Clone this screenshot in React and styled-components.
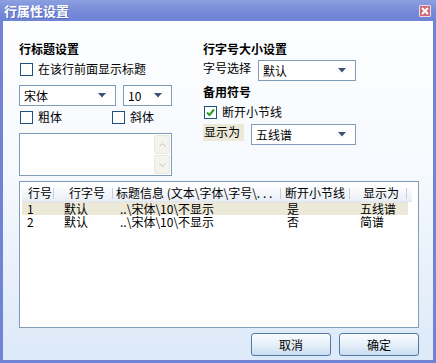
import React from 'react';
import styled, { createGlobalStyle } from 'styled-components';

const GlobalStyle = createGlobalStyle`
    html, body {
        margin: 0;
        padding: 0;
    }
    body {
        font-family: "Noto Sans CJK SC", "DejaVu Sans", sans-serif;
        font-size: 12px;
        color: #000;
    }
`;

const columns = [
    { title: '行号', width: 32, head: 6, cell: 5 },
    { title: '行字号', width: 59, head: 15, cell: 10 },
    { title: '标题信息 (文本\\字体\\字号\\. . .', width: 168, head: 3, cell: 7 },
    { title: '断开小节线', width: 69, head: 4, cell: 6 },
    { title: '显示为', width: 57, head: 13, cell: 10 },
];

const rows = [
    ['1', '默认', '..\\宋体\\10\\不显示', '是', '五线谱'],
    ['2', '默认', '..\\宋体\\10\\不显示', '否', '简谱'],
];

function Check({ checked }) {
    return (
        <Box>
            {checked && (
                <svg width="9" height="9" viewBox="0 0 9 9">
                    <path d="M1 4.5 L3.5 7 L8 1.5" fill="none" stroke="#21a121" strokeWidth="2" />
                </svg>
            )}
        </Box>
    );
}

function Combo({ width, children }) {
    return (
        <ComboBox $width={width}>
            <span>{children}</span>
            <svg width="8" height="5" viewBox="0 0 8 5">
                <path d="M0 0 H8 L4 4.5 Z" fill="#3d5277" />
            </svg>
        </ComboBox>
    );
}

export default function App() {
    return (
        <>
            <GlobalStyle />
            <Window>
                <TitleBar>
                    <Title>行属性设置</Title>
                    <CloseButton>
                        <svg width="8" height="8" viewBox="0 0 8 8">
                            <path d="M1 1 L7 7 M7 1 L1 7" stroke="#fff" strokeWidth="2" />
                        </svg>
                    </CloseButton>
                </TitleBar>

                <Client>
                    <TopSection>
                        <Column>
                            <Heading>行标题设置</Heading>
                            <CheckRow $top={4}>
                                <Check />
                                <span>在该行前面显示标题</span>
                            </CheckRow>
                            <ComboRow>
                                <Combo width={97}>宋体</Combo>
                                <Combo width={49}>10</Combo>
                            </ComboRow>
                            <CheckRow $top={3}>
                                <CheckItem $width={87}>
                                    <Check />
                                    <span>粗体</span>
                                </CheckItem>
                                <CheckItem>
                                    <Check />
                                    <span>斜体</span>
                                </CheckItem>
                            </CheckRow>
                            <TextArea>
                                <ScrollButtons>
                                    <ScrollButton>
                                        <svg width="7" height="4" viewBox="0 0 7 4">
                                            <path d="M0.5 3.5 L3.5 0.5 L6.5 3.5" fill="none" stroke="#c5c4bc" />
                                        </svg>
                                    </ScrollButton>
                                    <ScrollButton>
                                        <svg width="7" height="4" viewBox="0 0 7 4">
                                            <path d="M0.5 0.5 L3.5 3.5 L6.5 0.5" fill="none" stroke="#c5c4bc" />
                                        </svg>
                                    </ScrollButton>
                                </ScrollButtons>
                            </TextArea>
                        </Column>

                        <Column>
                            <Heading>行字号大小设置</Heading>
                            <FieldRow $top={3}>
                                <Label>字号选择</Label>
                                <Combo width={98}>默认</Combo>
                            </FieldRow>
                            <Heading $top={4}>备用符号</Heading>
                            <CheckRow $top={4}>
                                <Check checked />
                                <span>断开小节线</span>
                            </CheckRow>
                            <FieldRow $top={4}>
                                <ShadedLabel>显示为</ShadedLabel>
                                <Combo width={105}>五线谱</Combo>
                            </FieldRow>
                        </Column>
                    </TopSection>

                    <ListView>
                        <HeaderRow>
                            {columns.map((c) => (
                                <HeaderCell key={c.title} $width={c.width} $pad={c.head}>
                                    {c.title}
                                </HeaderCell>
                            ))}
                        </HeaderRow>
                        {rows.map((r, i) => (
                            <DataRow key={i} $selected={i === 0}>
                                {r.map((v, j) => (
                                    <DataCell key={j} $width={columns[j].width} $pad={columns[j].cell}>
                                        {v}
                                    </DataCell>
                                ))}
                            </DataRow>
                        ))}
                    </ListView>

                    <ButtonBar>
                        <Button>取消</Button>
                        <Button>确定</Button>
                    </ButtonBar>
                </Client>
            </Window>
        </>
    );
}

const Window = styled.div`
    width: 436px;
    height: 363px;
    display: flex;
    flex-direction: column;
    overflow: hidden;
`;

const TitleBar = styled.div`
    height: 21px;
    flex: none;
    display: flex;
    align-items: center;
    justify-content: space-between;
    padding: 0 5px 0 4px;
    background: linear-gradient(#8c9fe0, #7489d8 60%, #6e84d4);
`;

const Title = styled.span`
    color: #fff;
    font-size: 13px;
    font-weight: bold;
    text-shadow: 1px 1px 0 rgba(40, 50, 120, 0.35);
`;

const CloseButton = styled.div`
    width: 10px;
    height: 10px;
    border: 1px solid #f1dadd;
    border-radius: 1px;
    background: #c96b78;
    display: flex;
    align-items: center;
    justify-content: center;
    margin-top: 1px;
`;

const Client = styled.div`
    flex: 1;
    display: flex;
    flex-direction: column;
    border: 3px solid #6f84d5;
    border-top: none;
    padding: 20px 14px 4px 16px;
    background: linear-gradient(#fdfeff, #f6f9fd 45%, #dce9f8);
`;

const TopSection = styled.div`
    display: flex;
    gap: 31px;
    height: 135px;
`;

const Column = styled.div`
    width: 153px;
    display: flex;
    flex-direction: column;
`;

const Heading = styled.div`
    font-weight: bold;
    line-height: 16px;
    margin-top: ${(p) => p.$top || 0}px;
`;

const CheckRow = styled.div`
    display: flex;
    align-items: center;
    gap: 5px;
    height: 16px;
    line-height: 16px;
    margin-top: ${(p) => p.$top || 0}px;
`;

const CheckItem = styled.div`
    display: flex;
    align-items: center;
    gap: 5px;
    width: ${(p) => (p.$width ? `${p.$width}px` : 'auto')};
`;

const Box = styled.span`
    width: 11px;
    height: 11px;
    border: 1px solid #1c5180;
    background: #fff;
    display: flex;
    align-items: center;
    justify-content: center;
    flex: none;
    margin-left: 1px;
`;

const ComboRow = styled.div`
    display: flex;
    gap: 7px;
    margin-top: 8px;
`;

const ComboBox = styled.div`
    width: ${(p) => p.$width}px;
    height: 21px;
    box-sizing: border-box;
    border: 1px solid #7f9db9;
    background: #fff;
    display: flex;
    align-items: center;
    justify-content: space-between;
    padding: 0 9px 0 4px;
    line-height: 16px;
`;

const FieldRow = styled.div`
    display: flex;
    align-items: flex-start;
    height: 20px;
    margin-top: ${(p) => p.$top || 0}px;
`;

const Label = styled.span`
    width: 55px;
    line-height: 16px;
`;

const ShadedLabel = styled.span`
    width: 41px;
    height: 17px;
    line-height: 15px;
    padding-left: 1px;
    box-sizing: border-box;
    background: #ece9d8;
    margin-right: 7px;
`;

const TextArea = styled.div`
    margin-top: 8px;
    height: 43px;
    box-sizing: border-box;
    border: 1px solid #7f9db9;
    background: #fff;
    display: flex;
    justify-content: flex-end;
    padding: 1px 1px 1px 0;
`;

const ScrollButtons = styled.div`
    width: 16px;
    display: flex;
    flex-direction: column;
    gap: 1px;
`;

const ScrollButton = styled.div`
    flex: 1;
    border: 1px solid #e8e7e0;
    border-radius: 2px;
    background: #f4f3ee;
    display: flex;
    align-items: center;
    justify-content: center;
`;

const ListView = styled.div`
    margin-top: 5px;
    height: 147px;
    box-sizing: border-box;
    border: 1px solid #7f9db9;
    background: #fff;
    padding: 3px 2px 0 2px;
`;

const HeaderRow = styled.div`
    display: flex;
    height: 16px;
    width: 390px;
    background: linear-gradient(#ffffff, #e9eef6);
    border-bottom: 1px solid #e0e6ef;
`;

const HeaderCell = styled.div`
    width: ${(p) => p.$width}px;
    height: 16px;
    box-sizing: border-box;
    padding-left: ${(p) => p.$pad}px;
    line-height: 16px;
    white-space: nowrap;
    overflow: hidden;
    background: linear-gradient(#c9cfd9, #c9cfd9) right center / 1px 11px no-repeat;
`;

const DataRow = styled.div`
    display: flex;
    width: 386px;
    height: 13px;
    line-height: 13px;
    background: ${(p) => (p.$selected ? '#ece9d8' : 'transparent')};
`;

const DataCell = styled.div`
    width: ${(p) => p.$width}px;
    padding-left: ${(p) => p.$pad}px;
    box-sizing: border-box;
    white-space: nowrap;
`;

const ButtonBar = styled.div`
    display: flex;
    justify-content: flex-end;
    gap: 8px;
    margin-top: 5px;
`;

const Button = styled.div`
    width: 80px;
    height: 23px;
    box-sizing: border-box;
    border: 1px solid #4f7aa6;
    border-radius: 3px;
    background: linear-gradient(#fbfdff, #e3eef9 55%, #c9ddf1);
    display: flex;
    align-items: center;
    justify-content: center;
    line-height: 16px;
`;
